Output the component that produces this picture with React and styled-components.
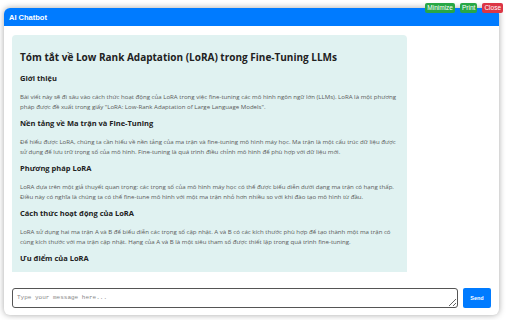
import React from 'react'
import styled, { createGlobalStyle } from 'styled-components'

const GlobalStyle = createGlobalStyle`
  html, body {
    margin: 0;
    padding: 0;
    background: #ffffff;
    font-family: "Open Sans", "Noto Sans", Arial, sans-serif;
  }
`

const Page = styled.div`
  width: 512px;
  height: 320px;
  padding: 8px 13px 5px 4px;
  box-sizing: border-box;
`

const Window = styled.div`
  position: relative;
  width: 495px;
  height: 307px;
  box-sizing: border-box;
  background: #fff;
  border-radius: 6px;
  box-shadow: 0 0 6px rgba(0, 0, 0, 0.35);
  display: flex;
  flex-direction: column;
`

const Header = styled.div`
  flex: none;
  height: 18px;
  background: #007bff;
  border-radius: 6px 6px 0 0;
  display: flex;
  align-items: center;
  padding-left: 5px;
  color: #fff;
  font-family: "Liberation Sans", Arial, sans-serif;
  font-weight: bold;
  font-size: 7.5px;
`

const Controls = styled.div`
  position: absolute;
  top: -5px;
  right: -4px;
  display: flex;
  gap: 5px;
`

const CtrlButton = styled.button`
  margin: 0;
  border: none;
  border-radius: 2px;
  height: 10px;
  padding: 0 2px;
  font-family: "Liberation Sans", Arial, sans-serif;
  font-size: 6.5px;
  line-height: 10px;
  color: #fff;
  background: ${p => (p.danger ? '#dc3545' : '#28a745')};
`

const Body = styled.div`
  flex: 1;
  min-height: 0;
  display: flex;
  flex-direction: column;
  padding: 9px 6px 7px 8px;
`

const Messages = styled.div`
  flex: 1;
  min-height: 0;
  overflow-y: scroll;
  &::-webkit-scrollbar {
    width: 6px;
  }
  &::-webkit-scrollbar-track {
    background: #f1f1f1;
    border-radius: 3px;
  }
  &::-webkit-scrollbar-thumb {
    background: #c1c1c1;
    border-radius: 3px;
  }
`

const Bubble = styled.div`
  width: 395px;
  box-sizing: border-box;
  background: #e0f2f1;
  border-radius: 4px;
  padding: 16px 8px 10px 8px;
  color: #212121;
`

const Title = styled.h2`
  font-size: 10px;
  line-height: 12px;
  font-weight: bold;
  margin: 0 0 10px;
`

const Section = styled.h3`
  font-size: 7.5px;
  line-height: 10px;
  font-weight: bold;
  margin: 6px 0 9px;
`

const Para = styled.p`
  font-size: 6.1px;
  line-height: 10px;
  color: #5a5a5a;
  margin: 0;
`

const InputRow = styled.div`
  flex: none;
  height: 20px;
  display: flex;
  gap: 5px;
  margin-top: 16px;
  padding-right: 2px;
`

const MessageInput = styled.textarea`
  flex: 1;
  display: block;
  margin: 0;
  height: 20px;
  box-sizing: border-box;
  border: 1px solid #555;
  border-radius: 3px;
  padding: 5px 4px;
  resize: vertical;
  font-family: "Liberation Mono", "Courier New", monospace;
  font-size: 6px;
  line-height: 8px;
  &::placeholder {
    color: #888;
  }
`

const SendButton = styled.button`
  margin: 0;
  width: 28px;
  height: 20px;
  border: none;
  border-radius: 2px;
  background: #007bff;
  color: #fff;
  font-family: "Liberation Sans", Arial, sans-serif;
  font-weight: bold;
  font-size: 5.5px;
`

const sections = [
  {
    title: 'Giới thiệu',
    text: 'Bài viết này sẽ đi sâu vào cách thức hoạt động của LoRA trong việc fine-tuning các mô hình ngôn ngữ lớn (LLMs). LoRA là một phương pháp được đề xuất trong giấy "LoRA: Low-Rank Adaptation of Large Language Models".',
  },
  {
    title: 'Nền tảng về Ma trận và Fine-Tuning',
    text: 'Để hiểu được LoRA, chúng ta cần hiểu về nền tảng của ma trận và fine-tuning mô hình máy học. Ma trận là một cấu trúc dữ liệu được sử dụng để lưu trữ trọng số của mô hình. Fine-tuning là quá trình điều chỉnh mô hình để phù hợp với dữ liệu mới.',
  },
  {
    title: 'Phương pháp LoRA',
    text: 'LoRA dựa trên một giả thuyết quan trọng: các trọng số của mô hình máy học có thể được biểu diễn dưới dạng ma trận có hạng thấp. Điều này có nghĩa là chúng ta có thể fine-tune mô hình với một ma trận nhỏ hơn nhiều so với khi đào tạo mô hình từ đầu.',
  },
  {
    title: 'Cách thức hoạt động của LoRA',
    text: 'LoRA sử dụng hai ma trận A và B để biểu diễn các trọng số cập nhật. A và B có các kích thước phù hợp để tạo thành một ma trận có cùng kích thước với ma trận cập nhật. Hạng của A và B là một siêu tham số được thiết lập trong quá trình fine-tuning.',
  },
  {
    title: 'Ưu điểm của LoRA',
    text: 'LoRA giúp giảm đáng kể số lượng tham số cần huấn luyện, tiết kiệm bộ nhớ và thời gian đào tạo, đồng thời vẫn giữ được hiệu suất tương đương với fine-tuning toàn bộ mô hình.',
  },
]

export default function App() {
  return (
    <Page>
      <GlobalStyle />
      <Window>
        <Header>AI Chatbot</Header>
        <Controls>
          <CtrlButton>Minimize</CtrlButton>
          <CtrlButton>Print</CtrlButton>
          <CtrlButton danger>Close</CtrlButton>
        </Controls>
        <Body>
          <Messages>
            <Bubble>
              <Title>Tóm tắt về Low Rank Adaptation (LoRA) trong Fine-Tuning LLMs</Title>
              {sections.map(s => (
                <React.Fragment key={s.title}>
                  <Section>{s.title}</Section>
                  <Para>{s.text}</Para>
                </React.Fragment>
              ))}
            </Bubble>
          </Messages>
          <InputRow>
            <MessageInput placeholder="Type your message here..." />
            <SendButton>Send</SendButton>
          </InputRow>
        </Body>
      </Window>
    </Page>
  )
}
